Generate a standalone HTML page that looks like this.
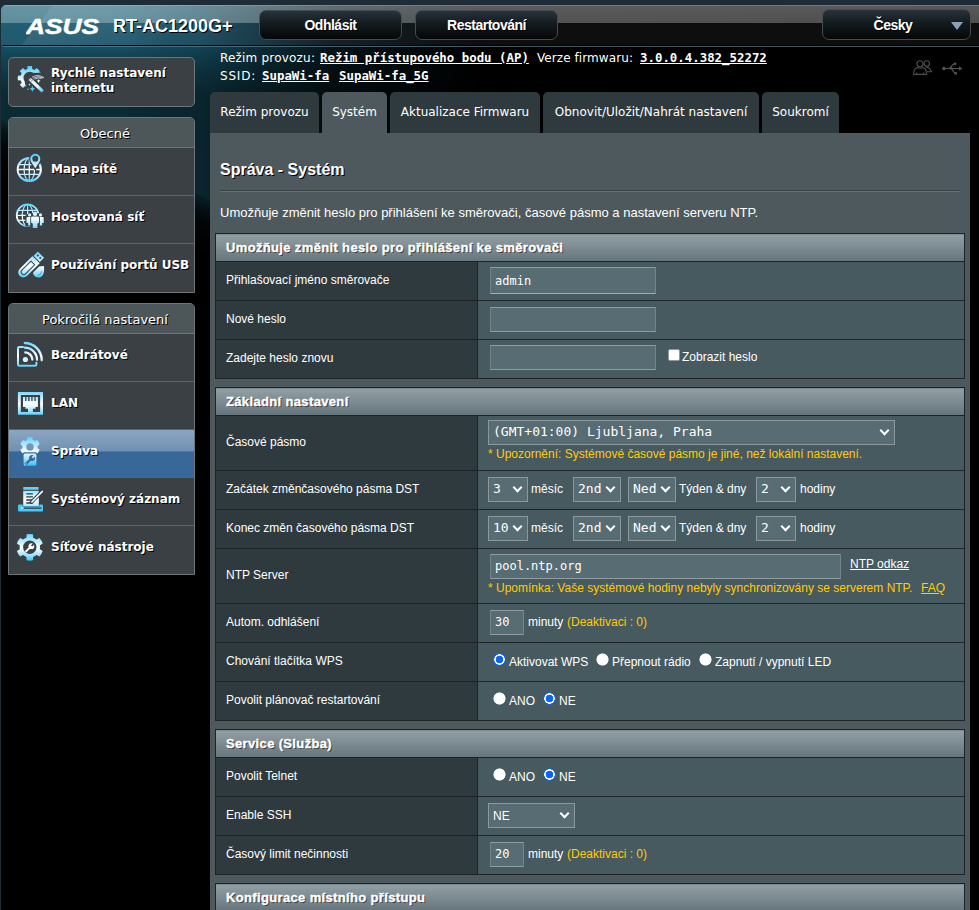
<!DOCTYPE html>
<html lang="cs">
<head>
<meta charset="utf-8">
<title>ASUS Wireless Router RT-AC1200G+ - Systém</title>
<style>
html,body{margin:0;padding:0;}
body{width:979px;height:910px;overflow:hidden;background:#1e2c37;position:relative;
  font-family:"Liberation Sans",Arial,sans-serif;font-size:12px;color:#fff;}
#page{position:absolute;left:1px;top:5px;width:978px;height:905px;background:#000;border-top-left-radius:5px;overflow:hidden;}
#glow{position:absolute;left:0;top:0;width:978px;height:420px;
  background:
   linear-gradient(200.6deg, rgba(0,0,0,0) 0px, rgba(0,0,0,0) 450px, rgba(0,0,0,.5) 461px, rgba(0,0,0,.85) 476px, #000 505px),
   linear-gradient(90deg, rgba(0,0,0,0) 0px, rgba(0,0,0,0) 120px, rgba(0,0,0,.15) 200px, rgba(0,0,0,.45) 265px, rgba(0,0,0,.75) 335px, rgba(0,0,0,1) 480px),
   linear-gradient(180deg, #17586e 0px, #165066 40px, #124656 50px, #0e3845 68px, #0a2a34 92px, #0b2b35 210px);}
#hdr{position:absolute;left:0;top:0;width:978px;height:43px;}
#hdr .gloss{position:absolute;left:0;top:0;width:978px;height:18px;background:linear-gradient(180deg,rgba(255,255,255,.05),rgba(255,255,255,0)),linear-gradient(90deg,rgba(229,250,251,.34) 0px,rgba(235,248,250,.35) 120px,rgba(255,255,255,.33) 330px,rgba(255,255,255,.31) 978px);border-top:1px solid rgba(255,255,255,.22);box-sizing:border-box;}
#hdr .low{position:absolute;left:0;top:18px;width:978px;height:22px;background:rgba(255,255,255,.055);}
#hdr .sheen{position:absolute;left:52px;top:0;width:150px;height:41px;transform:skewX(-38deg);transform-origin:0 0;background:linear-gradient(90deg,rgba(255,255,255,.08),rgba(255,255,255,.03) 70%,rgba(255,255,255,0));}
#hdr .line1{position:absolute;left:2px;top:40px;width:976px;height:1px;background:#000;}
#hdr .line2{position:absolute;left:2px;top:41px;width:976px;height:1px;background:linear-gradient(90deg,#4a7a90 0px,#46666f 300px,#4a585e 600px);}
#logo{position:absolute;left:25px;top:12px;}
#model{position:absolute;left:112px;top:11px;font-weight:bold;font-size:18px;line-height:20px;color:#fff;text-shadow:1px 1px 0 #000;white-space:nowrap;}
.tbtn{position:absolute;top:5px;height:28px;width:141px;border:1px solid #434d52;border-radius:7px;
  background:linear-gradient(180deg,#27333a 0%,#141b1f 45%,#050708 100%);
  font-weight:bold;font-size:14px;letter-spacing:-.5px;line-height:29px;text-align:center;color:#fff;text-shadow:1px 1px 0 #000;}
#lang{left:821px;top:4px;width:147px;height:29px;line-height:30px;}
#lang span{position:absolute;left:0;top:0;width:140px;text-align:center;}
#lang i{position:absolute;left:128px;top:12px;width:0;height:0;border-left:6px solid transparent;border-right:6px solid transparent;border-top:8px solid #8ba2b6;}

.info{position:absolute;left:219px;font-family:"DejaVu Sans",Verdana,sans-serif;font-size:12px;line-height:16px;white-space:nowrap;color:#fff;}
.info span,.info b{position:absolute;top:0;left:0;}
.info b{font-family:"DejaVu Sans Mono","Liberation Mono",monospace;font-size:12.4px;font-weight:bold;text-decoration:underline;}

/* left menu */
.mbox{position:absolute;left:7px;width:185px;border:1px solid #6e7679;background:#3a4043;border-radius:5px 5px 0 0;overflow:hidden;}
.mhead{height:29px;line-height:31px;padding-left:7px;text-align:center;background:#4d5659;border-bottom:1px solid #6e7679;
  font-family:"DejaVu Sans",Verdana,sans-serif;font-size:13px;color:#fff;text-shadow:1px 1px 0 #000;}
.mitem{position:relative;height:47px;border-bottom:1px solid #5b6467;
  font-family:"DejaVu Sans",Verdana,sans-serif;font-weight:bold;font-size:12px;color:#fff;text-shadow:1px 1px 0 #000;}
.mitem:last-child{border-bottom:none;height:48px;}
.mitem span{position:absolute;left:42px;top:13px;line-height:16px;white-space:nowrap;}
.mitem svg{position:absolute;}
.mitem.cur{background:linear-gradient(180deg,#8ca6c1 0%,#7091b3 44%,#38689a 47%,#38689a 100%);}

/* tabs */
.tab{position:absolute;top:87px;height:41px;background:#2f3a3e;border-radius:5px 5px 0 0;
  font-family:"DejaVu Sans",Verdana,sans-serif;font-size:12px;line-height:41px;text-align:center;color:#fff;white-space:nowrap;}
.tab.act{background:#4d595d;}

#panel{position:absolute;left:209px;top:128px;width:760px;height:800px;background:#4d595d;}
#title{position:absolute;left:10px;top:27px;font-weight:bold;font-size:16px;line-height:20px;text-shadow:1px 1px 0 #000;}
#hr{position:absolute;left:10px;top:57px;width:740px;height:1px;background:#363f42;border-bottom:1px solid #667176;}
#desc{position:absolute;left:10px;top:71px;font-size:13px;line-height:18px;white-space:nowrap;}
#tables{position:absolute;left:5px;top:100px;width:750px;}

table.ft{width:750px;border-collapse:collapse;border:1px solid #1d2326;table-layout:fixed;margin:0 0 8px 0;}
table.ft thead td{height:27px;padding:0 0 0 10px;background:linear-gradient(180deg,#92a0a5 0%,#66757c 100%);
  font-weight:bold;font-size:13px;letter-spacing:.35px;color:#fff;text-shadow:1px 1px 0 #333;border:1px solid #1d2326;-webkit-text-stroke:.35px #fff;}
table.ft th{height:35px;background:#2f3a3e;border:1px solid #1d2326;text-align:left;font-weight:normal;font-size:12px;padding:0 0 3px 10px;color:#fff;}
table.ft td{background:#475a5f;border:1px solid #1d2326;padding:0;font-size:12px;color:#fff;white-space:nowrap;}
table.ft tr.h2 th{height:51px;}
.c{position:relative;height:38px;}
tr.h2 .c{height:54px;}
.c>*{position:absolute;white-space:nowrap;}
.t{line-height:14px;font-size:12px;}
.inp{box-sizing:border-box;height:25px;border:1px solid #909c9f;border-left-color:#74848a;border-right-color:#74848a;background:#576d73;
  font-family:"DejaVu Sans Mono","Liberation Mono",monospace;font-size:12px;line-height:23px;padding:0 0 0 4px;color:#fff;}
.sl{box-sizing:border-box;height:25px;border:1px solid #8b989c;background:#576d73;
  font-family:"DejaVu Sans Mono","Liberation Mono",monospace;font-size:13px;line-height:21px;padding:0 0 0 4px;color:#fff;text-align:left;}
.sl:after{content:"";position:absolute;right:6px;top:6px;width:5px;height:5px;border-right:2px solid #fff;border-bottom:2px solid #fff;transform:rotate(45deg);}
.y{color:#fc0;}
.rad{width:13px;height:13px;border-radius:50%;background:radial-gradient(circle at center,#fff 0,#fff 5.7px,rgba(255,255,255,0) 6.5px);box-sizing:border-box;}
.rad.on{background:radial-gradient(circle at center,#0a64ff 0,#0a64ff 3.5px,#fff 4.1px,#fff 5px,#0a64ff 5.5px,#0a64ff 6.1px,rgba(10,100,255,0) 6.6px);}
.chk{width:12px;height:12px;background:#fff;border:1px solid #959b9d;border-radius:2px;box-sizing:border-box;}
a{color:#fff;text-decoration:underline;}
</style>
</head>
<body>
<div id="page">
  <!--i:defs--><svg width="0" height="0" style="position:absolute"><defs><linearGradient id="g" gradientUnits="userSpaceOnUse" x1="0" y1="6" x2="0" y2="35"><stop offset="0" stop-color="#45ccff"/><stop offset=".22" stop-color="#9be2ff"/><stop offset=".55" stop-color="#ffffff"/><stop offset=".8" stop-color="#9be2ff"/><stop offset="1" stop-color="#2fc4ff"/></linearGradient><linearGradient id="g2" gradientUnits="userSpaceOnUse" x1="19" y1="18" x2="33" y2="32"><stop offset="0" stop-color="#cfeaff"/><stop offset=".55" stop-color="#ffffff"/><stop offset="1" stop-color="#35c6ff"/></linearGradient></defs></svg><!--/i:defs-->
  <div id="glow"></div>
  <div id="hdr">
    <div class="gloss"></div><div class="low"></div><div class="sheen"></div>
    <div class="line1"></div><div class="line2"></div>
    <svg id="logo" width="78" height="20" viewBox="0 0 78 20"><text x="0" y="16.6" font-family="Liberation Sans, Arial, sans-serif" font-weight="bold" font-style="italic" font-size="21.3" fill="#fff" stroke="#fff" stroke-width=".5" textLength="73" lengthAdjust="spacingAndGlyphs">ASUS</text></svg>
    <div id="model">RT-AC1200G+</div>
    <div class="tbtn" style="left:258px">Odhlásit</div>
    <div class="tbtn" style="left:414px">Restartování</div>
    <div class="tbtn" id="lang"><span>Česky</span><i></i></div>
  </div>

  <!--i:hicons--><svg width="64" height="28" viewBox="0 0 64 28" style="position:absolute;left:904px;top:49px"><g fill="none" stroke="#4d4d4d" stroke-width="1.1"><circle cx="21.8" cy="9.5" r="2.7"/><path d="M20.5 13.2Q24.5 12.4 26.5 17.8H22"/><circle cx="15" cy="9.8" r="3"/><path d="M8.6 20.4Q8.8 14 12.6 13.6Q15 15 17.6 13.6Q21.4 14 21.6 20.4ZM11.7 18.4V20.4M18.5 18.4V20.4"/></g><g fill="none" stroke="#555" stroke-width="1.2"><path d="M40.5 14.5H54.5M43.5 14.5Q46 14.3 47 11.5Q48 9.6 50 9.8M45 14.5Q47.5 14.7 48.5 17.5Q49.3 19.3 50.5 19.3"/></g><g fill="#555"><circle cx="38.9" cy="14.5" r="1.7"/><path d="M54 12.2L57.4 14.5L54 16.8Z"/><circle cx="50.3" cy="9.7" r="1.2"/><rect x="49.6" y="18.1" width="2.4" height="2.4"/></g></svg><!--/i:hicons-->
  <div class="info" style="top:45px"><span style="letter-spacing:.2px">Režim provozu:</span><b style="left:100px">Režim přístupového bodu (AP)</b><span style="left:317px;letter-spacing:.08px">Verze firmwaru:</span><b style="left:420px">3.0.0.4.382_52272</b></div>
  <div class="info" style="top:63px"><span style="letter-spacing:.8px">SSID:</span><b style="left:42px">SupaWi-fa</b><b style="left:119px">SupaWi-fa_5G</b></div>

  <div class="mbox" style="top:52px;height:48px;border-radius:5px">
    <div class="mitem" style="height:48px;border:none"><!--i:qis--><svg width="40" height="40" viewBox="0 0 40 40" style="left:1px;top:2px" ><path d="M22.19 9.01L22.09 6.12A12.1 12.1 0 0 0 17.51 6.12L17.41 9.01A9.3 9.3 0 0 0 15.14 9.95L13.01 7.98A12.1 12.1 0 0 0 9.78 11.21L11.75 13.34A9.3 9.3 0 0 0 10.81 15.61L7.92 15.71A12.1 12.1 0 0 0 7.92 20.29L10.81 20.39A9.3 9.3 0 0 0 11.75 22.66L9.78 24.79A12.1 12.1 0 0 0 13.01 28.02L15.14 26.05A9.3 9.3 0 0 0 17.41 26.99L17.51 29.88A12.1 12.1 0 0 0 22.09 29.88L22.19 26.99A9.3 9.3 0 0 0 24.46 26.05L26.59 28.02A12.1 12.1 0 0 0 29.82 24.79L27.85 22.66A9.3 9.3 0 0 0 28.79 20.39L31.68 20.29A12.1 12.1 0 0 0 31.68 15.71L28.79 15.61A9.3 9.3 0 0 0 27.85 13.34L29.82 11.21A12.1 12.1 0 0 0 26.59 7.98L24.46 9.95A9.3 9.3 0 0 0 22.19 9.01ZM13.50 18a6.3 6.3 0 1 0 12.6 0a6.3 6.3 0 1 0 -12.6 0Z" fill="url(#g)" fill-rule="evenodd"/><path d="M31.2 12.7C24.5 12.2 18 13 15.4 18.5C13.8 23 15.8 27.3 18.8 29.6L13 36H40V12.7Z" fill="#3a4043"/><path d="M26 11.6C28 12 30 12.2 31 12.7C28 12.7 26 12.6 24 12.9Z" fill="#8fdcff"/><path d="M22 17.3Q27.5 13.6 34 17.6M23.2 18.3Q28 15.2 33.2 18M24.6 19.2Q28.3 16.8 31.5 18.6" stroke="#c9d6e6" stroke-width=".9" fill="none"/><path d="M19.6 18.9L32.8 31.4" stroke="url(#g2)" stroke-width="3.3"/><path d="M19.3 20.6L21.6 18.2M20.7 21.9L23 19.5" stroke="#5c6f80" stroke-width=".7"/><polygon points="28.60,18.90 27.96,20.26 26.60,20.90 27.96,21.54 28.60,22.90 29.24,21.54 30.60,20.90 29.24,20.26" fill="#fff"/><polygon points="22.40,25.90 21.48,27.88 19.50,28.80 21.48,29.72 22.40,31.70 23.32,29.72 25.30,28.80 23.32,27.88" fill="#4fd0ff"/><polygon points="19.40,23.30 18.99,24.19 18.10,24.60 18.99,25.01 19.40,25.90 19.81,25.01 20.70,24.60 19.81,24.19" fill="#bfe9ff"/></svg><!--/i:qis--><span style="top:8px;line-height:15px">Rychlé nastavení<br>internetu</span></div>
  </div>

  <div class="mbox" style="top:112px;">
    <div class="mhead">Obecné</div>
    <div class="mitem"><!--i:map--><svg width="40" height="40" viewBox="0 0 40 40" style="left:1px;top:0px" ><g fill="none" stroke="url(#g)"><circle cx="19.3" cy="21.5" r="11.6" stroke-width="2"/><path d="M7.7 21.5H30.9M8.8 16.7H29.8M8.8 26.4H29.8M19.3 10V33" stroke-width="1.3"/><ellipse cx="19.3" cy="21.5" rx="5.2" ry="11.4" stroke-width="1.2"/></g><path d="M25.3 20.4C23.4 16.6 20.3 14.3 20.3 10.8A5 5 0 1 1 30.3 10.8C30.3 14.3 27.2 16.6 25.3 20.4Z" fill="#3a4043" stroke="#3a4043" stroke-width="2.6"/><path d="M25.3 20.4C23.4 16.6 20.3 14.3 20.3 10.8A5 5 0 1 1 30.3 10.8C30.3 14.3 27.2 16.6 25.3 20.4ZM22.3 10.8a3 3 0 1 0 6 0a3 3 0 1 0 -6 0Z" fill="url(#g)" fill-rule="evenodd"/><rect x="13.3" y="20.6" width="1.8" height="1.8" fill="#8fdcff"/><rect x="23.2" y="25.6" width="2.2" height="1.6" fill="#c8eeff"/></svg><!--/i:map--><span>Mapa sítě</span></div>
    <div class="mitem"><!--i:guest--><svg width="40" height="40" viewBox="0 0 40 40" style="left:1px;top:0px" ><g fill="none" stroke="url(#g)"><circle cx="17.6" cy="19.3" r="10.9" stroke-width="1.7"/><path d="M8.2 14.3H27M6.8 19.3H28.4M8.2 24.4H27M17.6 8.4V30.2" stroke-width="1.2"/><ellipse cx="17.6" cy="19.3" rx="5.4" ry="10.8" stroke-width="1.2"/></g><path d="M15.4 20.4C15.4 16 34.8 16 34.8 20.4V30H29.8V33H20.5V30.6H15.4Z" fill="#3a4043"/><g fill="url(#g)"><circle cx="25" cy="17.7" r="2.2"/><path d="M21.1 21.6Q21.1 20.4 22.3 20.4H27.8Q29 20.4 29 21.6V26.6L27.4 27.8V32H22.8V27.8L21.1 26.6Z"/><circle cx="19.6" cy="18.9" r="1.6"/><path d="M16.5 22Q16.5 21 17.5 21H20.3V29.4H18.1V27H16.5Z"/><circle cx="30.5" cy="18.9" r="1.6"/><path d="M33.7 22Q33.7 21 32.7 21H29.9V29.4H32.1V27H33.7Z"/></g></svg><!--/i:guest--><span>Hostovaná síť</span></div>
    <div class="mitem"><!--i:usb--><svg width="40" height="40" viewBox="0 0 40 40" style="left:1px;top:0px" ><mask id="mu"><g transform="rotate(45 19.1 22.6)"><path d="M14 12.7H24.2V30.7A5.1 5.1 0 0 1 14 30.7Z" fill="#fff"/><path d="M16.5 17.4H21.7V30.2A2.6 2.6 0 0 1 16.5 30.2Z" fill="none" stroke="#000" stroke-width="1"/><rect x="14.7" y="5.8" width="8.8" height="6" fill="#fff"/><rect x="16.5" y="7.7" width="1.7" height="1.8" fill="#000"/><rect x="20" y="7.7" width="1.7" height="1.8" fill="#000"/></g></mask><rect width="40" height="40" fill="url(#g)" mask="url(#mu)"/><path d="M33.9 22C34.6 26 34.2 33.5 28.6 33.5C24.6 33.5 22.6 30.6 23.3 27.6L28.4 22.6C30.4 22.4 32.4 22.3 33.9 22Z" fill="url(#g)"/><path d="M22.2 28.6L29 21.8" stroke="#3a4043" stroke-width="1.1"/><path d="M27.6 31.4Q31.3 31 31.8 27.2" stroke="#5d7f95" stroke-width=".8" fill="none"/></svg><!--/i:usb--><span>Používání portů USB</span></div>
  </div>

  <div class="mbox" style="top:298px;">
    <div class="mhead">Pokročilá nastavení</div>
    <div class="mitem"><!--i:wl--><svg width="40" height="40" viewBox="0 0 40 40" style="left:1px;top:0px" ><g fill="none" stroke="url(#g)" stroke-linecap="round"><path d="M13 13.1H9.2Q8 13.1 8 14.3V30.5Q8 31.7 9.2 31.7H25.2Q26.4 31.7 26.4 30.5V28.8" stroke-width="2"/><path d="M15.3 18.3A7.6 7.6 0 0 1 22.4 25.6" stroke-width="2.3"/><path d="M15 13.7A12.2 12.2 0 0 1 27 25.8" stroke-width="2.3"/><path d="M14.8 9A17 17 0 0 1 31.7 26.3" stroke-width="2.3"/></g><circle cx="15.4" cy="25.5" r="2.6" fill="#d4f1ff"/></svg><!--/i:wl--><span>Bezdrátové</span></div>
    <div class="mitem"><!--i:lan--><svg width="40" height="40" viewBox="0 0 40 40" style="left:1px;top:0px" ><path d="M7.9 9.9H33V32.7H7.9ZM10.8 12.9V29.9H30.1V12.9Z" fill="url(#g)" fill-rule="evenodd"/><path d="M13 14.9H15.2V18.9H16.5V14.9H18.2V18.9H19.6V14.9H21.3V18.9H22.6V14.9H24.4V18.9H25.7V14.9H27.9V25H25.5V26.8H22.9V29.9H18V26.8H15.4V25H13Z" fill="url(#g)"/></svg><!--/i:lan--><span>LAN</span></div>
    <div class="mitem cur"><!--i:adm--><svg width="40" height="40" viewBox="0 0 40 40" style="left:1px;top:0px" ><path d="M22.68 9.79L22.64 7.36A9.9 9.9 0 0 0 17.36 7.36L17.32 9.79A7.6 7.6 0 0 0 15.18 11.02L13.06 9.84A9.9 9.9 0 0 0 10.42 14.42L12.50 15.66A7.6 7.6 0 0 0 12.50 18.14L10.42 19.38A9.9 9.9 0 0 0 13.06 23.96L15.18 22.78A7.6 7.6 0 0 0 17.32 24.01L17.36 26.44A9.9 9.9 0 0 0 22.64 26.44L22.68 24.01A7.6 7.6 0 0 0 24.82 22.78L26.94 23.96A9.9 9.9 0 0 0 29.58 19.38L27.50 18.14A7.6 7.6 0 0 0 27.50 15.66L29.58 14.42A9.9 9.9 0 0 0 26.94 9.84L24.82 11.02A7.6 7.6 0 0 0 22.68 9.79ZM16.30 16.9a3.7 3.7 0 1 0 7.4 0a3.7 3.7 0 1 0 -7.4 0Z" fill="url(#g)" fill-rule="evenodd"/><rect x="12.5" y="22.2" width="15" height="15" rx="2.4" fill="#38689a"/><rect x="13.6" y="23.4" width="12.8" height="12.4" rx="1.5" fill="url(#g)"/><path d="M15.2 34.6L20.6 29.2" stroke="#38689a" stroke-width="2.2"/><circle cx="22.1" cy="28" r="3" fill="#38689a"/><path d="M22.4 27.8L25.4 24.6" stroke="#bfeaff" stroke-width="2"/><path d="M14.4 35.2L16.6 33" stroke="#e8f7ff" stroke-width=".8"/></svg><!--/i:adm--><span>Správa</span></div>
    <div class="mitem"><!--i:log--><svg width="40" height="40" viewBox="0 0 40 40" style="left:1px;top:0px" ><rect x="13.2" y="9" width="15.4" height="2.7" rx=".6" fill="#5bd3ff"/><rect x="8.1" y="26.4" width="24.9" height="7.2" rx="1.2" fill="#43caff"/><rect x="12.6" y="12.2" width="16.8" height="16.2" fill="#3a4043"/><rect x="13.2" y="12.8" width="15.6" height="15.3" fill="url(#g)"/><path d="M16.3 15.8H22.9M16.3 18.9H22.9M16.3 22H22.9M16.3 25H22.9" stroke="#2f3a40" stroke-width="1.3"/><path d="M14 30.1H31.5" stroke="#2b3940" stroke-width="1.2"/><circle cx="11.8" cy="30" r="1.2" fill="#9be4ff"/><path d="M32.6 13.1L21.6 24.1" stroke="#2f3a40" stroke-width="3.6" stroke-linecap="round"/><path d="M32.4 13.3L21.9 23.8" stroke="#e9f7ff" stroke-width="1.7" stroke-linecap="round"/></svg><!--/i:log--><span>Systémový záznam</span></div>
    <div class="mitem"><!--i:tools--><svg width="40" height="40" viewBox="0 0 40 40" style="left:1px;top:0px" ><path d="M23.20 11.68L22.99 8.28A13.4 13.4 0 0 0 16.61 8.28L16.40 11.68A10.2 10.2 0 0 0 13.17 13.55L10.12 12.03A13.4 13.4 0 0 0 6.94 17.55L9.77 19.44A10.2 10.2 0 0 0 9.77 23.16L6.94 25.05A13.4 13.4 0 0 0 10.12 30.57L13.17 29.05A10.2 10.2 0 0 0 16.40 30.92L16.61 34.32A13.4 13.4 0 0 0 22.99 34.32L23.20 30.92A10.2 10.2 0 0 0 26.43 29.05L29.48 30.57A13.4 13.4 0 0 0 32.66 25.05L29.83 23.16A10.2 10.2 0 0 0 29.83 19.44L32.66 17.55A13.4 13.4 0 0 0 29.48 12.03L26.43 13.55A10.2 10.2 0 0 0 23.20 11.68ZM13.10 21.3a6.7 6.7 0 1 0 13.4 0a6.7 6.7 0 1 0 -13.4 0Z" fill="url(#g)" fill-rule="evenodd"/><path d="M15.6 25.8L19.8 21.6" stroke="#fff" stroke-width="2"/><circle cx="21.4" cy="20.2" r="2.9" fill="#fff"/><path d="M21.6 20L24.4 17" stroke="#3a4043" stroke-width="1.8"/><path d="M14.6 26.8L16.4 25" stroke="#e8f7ff" stroke-width=".8"/></svg><!--/i:tools--><span>Síťové nástroje</span></div>
  </div>

  <div class="tab" style="left:209px;width:109px">Režim provozu</div>
  <div class="tab act" style="left:321px;width:65px">Systém</div>
  <div class="tab" style="left:389px;width:150px">Aktualizace Firmwaru</div>
  <div class="tab" style="left:542px;width:216px">Obnovit/Uložit/Nahrát nastavení</div>
  <div class="tab" style="left:761px;width:77px">Soukromí</div>

  <div id="panel">
    <div id="title">Správa - Systém</div>
    <div id="hr"></div>
    <div id="desc">Umožňuje změnit heslo pro přihlášení ke směrovači, časové pásmo a nastavení serveru NTP.</div>
    <div id="tables">
    <table class="ft">
      <colgroup><col style="width:262px"><col></colgroup>
      <thead><tr><td colspan="2">Umožňuje změnit heslo pro přihlášení ke směrovači</td></tr></thead>
      <tbody>
      <tr><th>Přihlašovací jméno směrovače</th><td><div class="c"><span class="inp" style="left:12px;top:5px;width:166px;height:27px;line-height:26px;border-bottom-color:#a3adb0">admin</span></div></td></tr>
      <tr><th>Nové heslo</th><td><div class="c"><span class="inp" style="left:12px;top:6px;width:166px"></span></div></td></tr>
      <tr><th>Zadejte heslo znovu</th><td><div class="c"><span class="inp" style="left:12px;top:5px;width:166px"></span><span class="chk" style="left:190px;top:9px"></span><span class="t" style="left:204px;top:10px;">Zobrazit heslo</span></div></td></tr>
      </tbody>
    </table>
    <table class="ft">
      <colgroup><col style="width:262px"><col></colgroup>
      <thead><tr><td colspan="2">Základní nastavení</td></tr></thead>
      <tbody>
      <tr class="h2"><th>Časové pásmo</th><td><div class="c"><span class="sl" style="left:10px;top:4px;width:407px;">(GMT+01:00) Ljubljana, Praha</span><span class="t y" style="left:10px;top:31px;">* Upozornění: Systémové časové pásmo je jiné, než lokální nastavení.</span></div></td></tr>
      <tr><th>Začátek změnčasového pásma DST</th><td><div class="c"><span class="sl" style="left:10px;top:6px;width:40px;">3</span><span class="t" style="left:53px;top:11px;">měsíc</span><span class="sl" style="left:95px;top:6px;width:48px;">2nd</span><span class="sl" style="left:150px;top:6px;width:48px;">Ned</span><span class="t" style="left:201px;top:11px;">Týden &amp; dny</span><span class="sl" style="left:278px;top:6px;width:40px;">2</span><span class="t" style="left:322px;top:11px;">hodiny</span></div></td></tr>
      <tr><th>Konec změn časového pásma DST</th><td><div class="c"><span class="sl" style="left:10px;top:6px;width:40px;">10</span><span class="t" style="left:53px;top:11px;">měsíc</span><span class="sl" style="left:95px;top:6px;width:48px;">2nd</span><span class="sl" style="left:150px;top:6px;width:48px;">Ned</span><span class="t" style="left:201px;top:11px;">Týden &amp; dny</span><span class="sl" style="left:278px;top:6px;width:40px;">2</span><span class="t" style="left:322px;top:11px;">hodiny</span></div></td></tr>
      <tr class="h2"><th>NTP Server</th><td><div class="c"><span class="inp" style="left:12px;top:5px;width:351px">pool.ntp.org</span><span class="t" style="left:372px;top:8px;"><a>NTP odkaz</a></span><span class="t y" style="left:10px;top:32px;">* Upomínka: Vaše systémové hodiny nebyly synchronizovány se serverem NTP.</span><span class="t" style="left:443px;top:32px;"><a class="y">FAQ</a></span></div></td></tr>
      <tr><th>Autom. odhlášení</th><td><div class="c"><span class="inp" style="left:12px;top:6px;width:34px">30</span><span class="t" style="left:50px;top:11px;">minuty</span><span class="t y" style="left:89px;top:11px;">(Deaktivaci : 0)</span></div></td></tr>
      <tr><th>Chování tlačítka WPS</th><td><div class="c"><span class="rad on" style="left:15px;top:10px"></span><span class="t" style="left:31px;top:12px;">Aktivovat WPS</span><span class="rad" style="left:118px;top:10px"></span><span class="t" style="left:134px;top:12px;">Přepnout rádio</span><span class="rad" style="left:221px;top:10px"></span><span class="t" style="left:237px;top:12px;">Zapnutí / vypnutí LED</span></div></td></tr>
      <tr><th>Povolit plánovač restartování</th><td><div class="c"><span class="rad" style="left:15px;top:10px"></span><span class="t" style="left:31px;top:12px;">ANO</span><span class="rad on" style="left:65px;top:10px"></span><span class="t" style="left:81px;top:12px;">NE</span></div></td></tr>
      </tbody>
    </table>
    <table class="ft">
      <colgroup><col style="width:262px"><col></colgroup>
      <thead><tr><td colspan="2">Service (Služba)</td></tr></thead>
      <tbody>
      <tr><th>Povolit Telnet</th><td><div class="c"><span class="rad" style="left:15px;top:10px"></span><span class="t" style="left:31px;top:12px;">ANO</span><span class="rad on" style="left:65px;top:10px"></span><span class="t" style="left:81px;top:12px;">NE</span></div></td></tr>
      <tr><th>Enable SSH</th><td><div class="c"><span class="sl" style="left:10px;top:6px;width:87px;font-family:'Liberation Sans',Arial,sans-serif;font-size:12px;line-height:24px">NE</span></div></td></tr>
      <tr><th>Časový limit nečinnosti</th><td><div class="c"><span class="inp" style="left:12px;top:6px;width:34px">20</span><span class="t" style="left:50px;top:11px;">minuty</span><span class="t y" style="left:89px;top:11px;">(Deaktivaci : 0)</span></div></td></tr>
      </tbody>
    </table>
    <table class="ft">
      <colgroup><col style="width:262px"><col></colgroup>
      <thead><tr><td colspan="2">Konfigurace místního přístupu</td></tr></thead>
      <tbody>
      <tr><th>Způsob ověřování</th><td><div class="c"><span class="sl" style="left:10px;top:6px;width:87px;font-family:'Liberation Sans',Arial,sans-serif;font-size:12px;line-height:24px">Výchozí</span></div></td></tr>
      </tbody>
    </table>
    </div>
  </div>
</div>
</body>
</html>
